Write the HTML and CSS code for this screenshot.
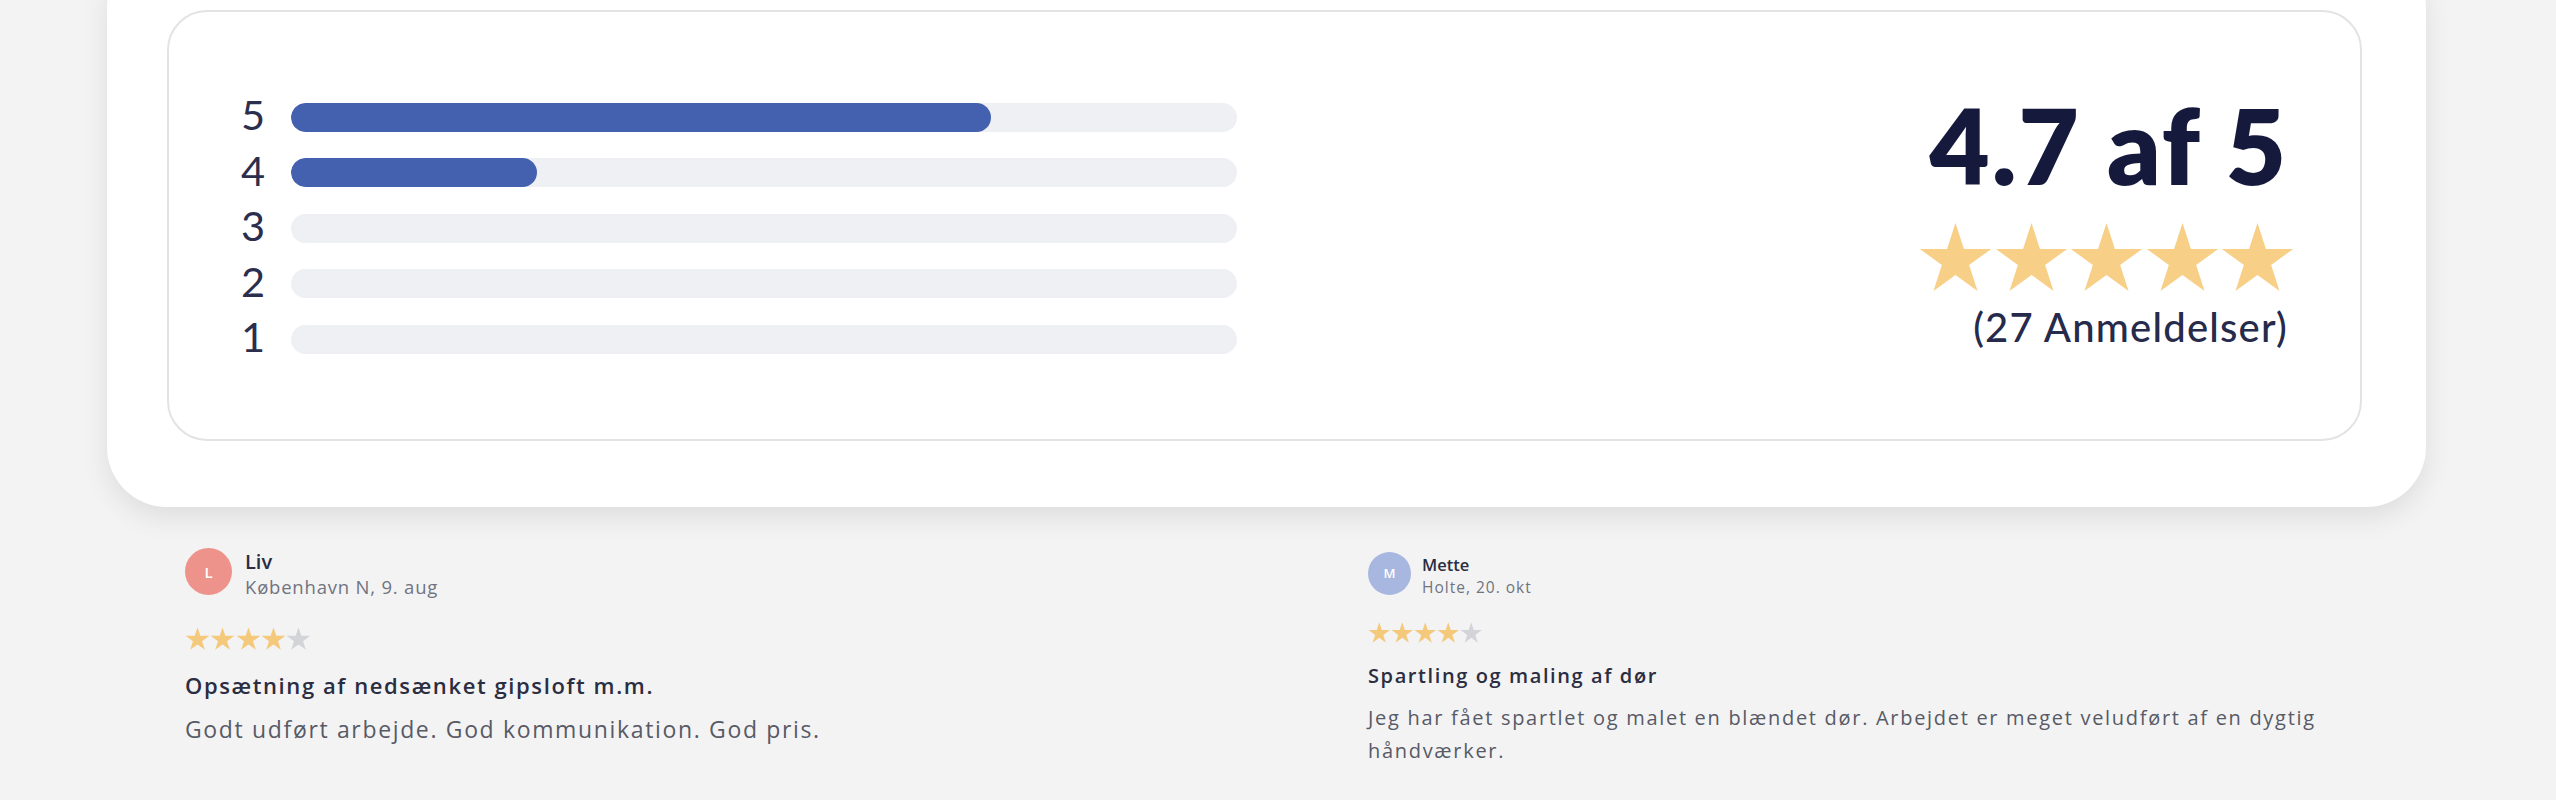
FILE: index.html
```html
<!DOCTYPE html>
<html lang="da">
<head>
<meta charset="utf-8">
<title>Anmeldelser</title>
<link rel="stylesheet" href="styles.css">
</head>
<body>
<main class="page">
  <section class="summary-card">
    <div class="summary-inner">
      <div class="dist">
        <div class="dist-row"><span class="dist-label">5</span><div class="track"><div class="fill" style="width:74%"></div></div></div>
        <div class="dist-row"><span class="dist-label">4</span><div class="track"><div class="fill" style="width:26%"></div></div></div>
        <div class="dist-row"><span class="dist-label">3</span><div class="track"><div class="fill" style="width:0%"></div></div></div>
        <div class="dist-row"><span class="dist-label">2</span><div class="track"><div class="fill" style="width:0%"></div></div></div>
        <div class="dist-row"><span class="dist-label">1</span><div class="track"><div class="fill" style="width:0%"></div></div></div>
      </div>
      <div class="score">
        <div class="score-value">4.7 af 5</div>
        <div class="big-stars">
          <svg class="big-star" viewBox="0 0 100 90.45"><polygon points="50,0 61.23,34.55 97.55,34.55 68.17,55.9 79.39,90.45 50,69.1 20.61,90.45 31.83,55.9 2.45,34.55 38.77,34.55"/></svg>
          <svg class="big-star" viewBox="0 0 100 90.45"><polygon points="50,0 61.23,34.55 97.55,34.55 68.17,55.9 79.39,90.45 50,69.1 20.61,90.45 31.83,55.9 2.45,34.55 38.77,34.55"/></svg>
          <svg class="big-star" viewBox="0 0 100 90.45"><polygon points="50,0 61.23,34.55 97.55,34.55 68.17,55.9 79.39,90.45 50,69.1 20.61,90.45 31.83,55.9 2.45,34.55 38.77,34.55"/></svg>
          <svg class="big-star" viewBox="0 0 100 90.45"><polygon points="50,0 61.23,34.55 97.55,34.55 68.17,55.9 79.39,90.45 50,69.1 20.61,90.45 31.83,55.9 2.45,34.55 38.77,34.55"/></svg>
          <svg class="big-star" viewBox="0 0 100 90.45"><polygon points="50,0 61.23,34.55 97.55,34.55 68.17,55.9 79.39,90.45 50,69.1 20.61,90.45 31.83,55.9 2.45,34.55 38.77,34.55"/></svg>
        </div>
        <div class="score-count">(27 Anmeldelser)</div>
      </div>
    </div>
  </section>

  <section class="reviews">
    <article class="review">
      <div class="review-head">
        <div class="avatar avatar-l">L</div>
        <div class="who">
          <div class="name">Liv</div>
          <div class="meta">København N, 9. aug</div>
        </div>
      </div>
      <div class="small-stars">
        <svg class="small-star on" viewBox="0 0 100 90.45"><polygon points="50,0 61.23,34.55 97.55,34.55 68.17,55.9 79.39,90.45 50,69.1 20.61,90.45 31.83,55.9 2.45,34.55 38.77,34.55"/></svg>
        <svg class="small-star on" viewBox="0 0 100 90.45"><polygon points="50,0 61.23,34.55 97.55,34.55 68.17,55.9 79.39,90.45 50,69.1 20.61,90.45 31.83,55.9 2.45,34.55 38.77,34.55"/></svg>
        <svg class="small-star on" viewBox="0 0 100 90.45"><polygon points="50,0 61.23,34.55 97.55,34.55 68.17,55.9 79.39,90.45 50,69.1 20.61,90.45 31.83,55.9 2.45,34.55 38.77,34.55"/></svg>
        <svg class="small-star on" viewBox="0 0 100 90.45"><polygon points="50,0 61.23,34.55 97.55,34.55 68.17,55.9 79.39,90.45 50,69.1 20.61,90.45 31.83,55.9 2.45,34.55 38.77,34.55"/></svg>
        <svg class="small-star off" viewBox="0 0 100 90.45"><polygon points="50,0 61.23,34.55 97.55,34.55 68.17,55.9 79.39,90.45 50,69.1 20.61,90.45 31.83,55.9 2.45,34.55 38.77,34.55"/></svg>
      </div>
      <h3 class="review-title">Opsætning af nedsænket gipsloft m.m.</h3>
      <p class="review-body">Godt udført arbejde. God kommunikation. God pris.</p>
    </article>

    <article class="review review-small">
      <div class="review-head">
        <div class="avatar avatar-m">M</div>
        <div class="who">
          <div class="name">Mette</div>
          <div class="meta">Holte, 20. okt</div>
        </div>
      </div>
      <div class="small-stars">
        <svg class="small-star on" viewBox="0 0 100 90.45"><polygon points="50,0 61.23,34.55 97.55,34.55 68.17,55.9 79.39,90.45 50,69.1 20.61,90.45 31.83,55.9 2.45,34.55 38.77,34.55"/></svg>
        <svg class="small-star on" viewBox="0 0 100 90.45"><polygon points="50,0 61.23,34.55 97.55,34.55 68.17,55.9 79.39,90.45 50,69.1 20.61,90.45 31.83,55.9 2.45,34.55 38.77,34.55"/></svg>
        <svg class="small-star on" viewBox="0 0 100 90.45"><polygon points="50,0 61.23,34.55 97.55,34.55 68.17,55.9 79.39,90.45 50,69.1 20.61,90.45 31.83,55.9 2.45,34.55 38.77,34.55"/></svg>
        <svg class="small-star on" viewBox="0 0 100 90.45"><polygon points="50,0 61.23,34.55 97.55,34.55 68.17,55.9 79.39,90.45 50,69.1 20.61,90.45 31.83,55.9 2.45,34.55 38.77,34.55"/></svg>
        <svg class="small-star off" viewBox="0 0 100 90.45"><polygon points="50,0 61.23,34.55 97.55,34.55 68.17,55.9 79.39,90.45 50,69.1 20.61,90.45 31.83,55.9 2.45,34.55 38.77,34.55"/></svg>
      </div>
      <h3 class="review-title">Spartling og maling af dør</h3>
      <p class="review-body">Jeg har fået spartlet og malet en blændet dør. Arbejdet er meget veludført af en dygtig håndværker.</p>
    </article>
  </section>
</main>
</body>
</html>
```

FILE: styles.css
```css
* { box-sizing: border-box; }

html, body {
  margin: 0;
  padding: 0;
  background: #f3f3f4;
  font-family: "Lato", "Open Sans", sans-serif;
  color: #1b1f40;
}

html { overflow: hidden; }

.page {
  width: 2556px;
  padding-bottom: 40px;
}

/* ---------- summary card ---------- */
.summary-card {
  margin: -52px 130px 0 107px;
  padding: 62px 64px 66px 60px;
  background: #ffffff;
  border-radius: 60px;
  box-shadow: 0 10px 28px rgba(0, 0, 0, 0.09);
}

.summary-inner {
  display: grid;
  grid-template-columns: 1fr 1fr;
  column-gap: 55px;
  align-items: center;
  height: 431px;
  padding: 0 72px;
  border: 2px solid #e3e3e6;
  border-radius: 40px;
}

.dist {
  display: flex;
  flex-direction: column;
  gap: 26.5px;
}

.dist-row {
  display: grid;
  grid-template-columns: 50px 1fr;
  align-items: center;
  height: 29px;
}

.dist-label {
  font-size: 41.5px;
  line-height: 28px;
  padding-bottom: 6px;
  color: #2b2e4d;
  font-weight: 400;
}

.track {
  height: 29px;
  background: #eff0f3;
  border-radius: 15px;
  overflow: hidden;
}

.fill {
  height: 100%;
  background: #4361ae;
  border-radius: 15px;
}

.score {
  justify-self: end;
  display: flex;
  flex-direction: column;
  align-items: flex-end;
  padding-bottom: 8px;
}

.score-value {
  font-size: 104px;
  line-height: 104px;
  font-weight: 800;
  color: #151a3d;
  letter-spacing: 2px;
}

.big-stars {
  display: flex;
  gap: 0.5px;
  margin-top: 26px;
  margin-right: -7px;
}

.big-star {
  width: 75px;
  height: 68px;
  fill: #f7cf87;
}

.score-count {
  margin-top: 13.5px;
  font-size: 40px;
  line-height: 46px;
  font-weight: 500;
  letter-spacing: 1.2px;
  color: #262a4b;
}

/* ---------- reviews ---------- */
.reviews {
  margin: 41px 0 0 185px;
  display: grid;
  grid-template-columns: 1000px 1000px;
  column-gap: 183px;
  align-items: start;
  font-family: "Open Sans", "Lato", sans-serif;
}

.review-head {
  display: flex;
  align-items: flex-start;
  gap: 13px;
}

.avatar {
  flex: none;
  width: 47px;
  height: 47px;
  border-radius: 50%;
  display: flex;
  align-items: center;
  justify-content: center;
  color: #ffffff;
  font-size: 15px;
  font-weight: 600;
}

.avatar-l { background: #ee928c; }
.avatar-m { background: #a8b7df; }

.name {
  font-size: 20px;
  line-height: 27px;
  font-weight: 600;
  color: #2b2d42;
}

.meta {
  font-size: 18.5px;
  line-height: 24px;
  letter-spacing: 0.8px;
  color: #71737f;
}

.small-stars {
  display: flex;
  gap: 0.3px;
  margin-top: 28px;
}

.small-star {
  width: 25px;
  height: 23px;
}

.small-star.on { fill: #f4c97b; }
.small-star.off { fill: #d3d4d8; }

.review-title {
  margin: 20px 0 0;
  font-size: 22px;
  line-height: 30px;
  font-weight: 600;
  letter-spacing: 1.6px;
  color: #2b2d40;
}

.review-body {
  margin: 13px 0 0;
  font-size: 23px;
  line-height: 33px;
  letter-spacing: 1.65px;
  color: #585a66;
}

/* second review is rendered a little smaller */
.review-small .review-head { gap: 11px; }
.review-small .avatar { width: 43px; height: 43px; margin-top: 3.5px; font-size: 13px; }
.review-small .who { padding-top: 5px; }
.review-small .name { font-size: 16.5px; line-height: 24px; }
.review-small .meta { font-size: 15.5px; line-height: 20px; letter-spacing: 1px; }
.review-small .small-stars { margin-top: 25px; gap: 0.5px; }
.review-small .small-star { width: 22.5px; height: 21px; }
.review-small .review-title { margin-top: 18.7px; font-size: 20px; line-height: 28px; letter-spacing: 1.6px; }
.review-small .review-body { margin-top: 11.5px; font-size: 20px; line-height: 33px; letter-spacing: 1.7px; }
```
